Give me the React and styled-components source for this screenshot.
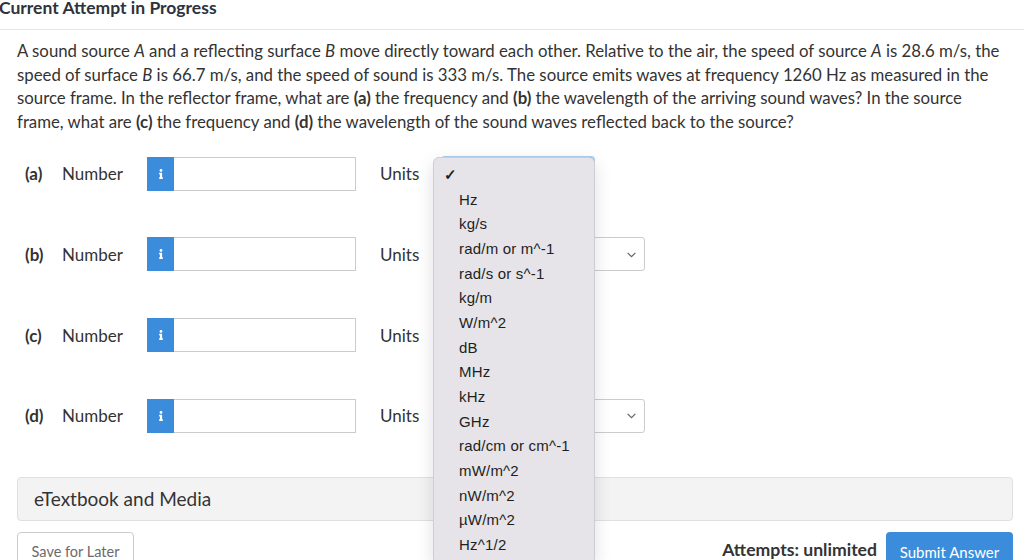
import React from 'react'
import styled, { createGlobalStyle } from 'styled-components'
import { FaInfo } from 'react-icons/fa'

const Global = createGlobalStyle`
  body {
    margin: 0;
    background: #fff;
    font-family: Lato, "Open Sans", sans-serif;
    color: #333;
    overflow: hidden;
  }
`

const Page = styled.div`
  position: relative;
  width: 1024px;
  height: 560px;
  overflow: hidden;
`

const Header = styled.div`
  height: 37px;
  border-bottom: 1px solid #e6e6e6;
  margin-top: -8px;
  h1 {
    margin: 0 0 0 -1px;
    font-size: 17.5px;
    font-weight: 700;
    color: #2d3339;
    line-height: 32px;
  }
`

const Body = styled.div`
  padding: 0 11px 0 17px;
`

const Question = styled.p`
  margin: 9px 12px 0 0;
  font-size: 16.8px;
  line-height: 23.7px;
  color: #333;
  i { font-style: italic; }
`

const Parts = styled.div`
  margin-top: 23px;
  display: flex;
  flex-direction: column;
  gap: 46.6px;
`

const Row = styled.div`
  display: flex;
  align-items: center;
  height: 34px;
  padding-left: 8px;
  font-size: 17px;
`

const Letter = styled.span`
  font-weight: 700;
  width: 37px;
  flex: none;
`

const NumLabel = styled.span`
  width: 85px;
  flex: none;
`

const InfoBtn = styled.span`
  width: 27px;
  height: 34px;
  background: #3b8ddc;
  color: #fff;
  display: flex;
  align-items: center;
  justify-content: center;
  flex: none;
  svg { font-size: 10px; }
`

const NumInput = styled.div`
  width: 181px;
  height: 32px;
  border: 1px solid #ccc;
  border-left: none;
  background: #fff;
  flex: none;
`

const UnitsLabel = styled.span`
  margin-left: 24px;
  width: 62px;
  flex: none;
`

const Select = styled.div`
  width: ${p => p.$w}px;
  height: 34px;
  border: 1px solid ${p => (p.$focus ? '#7fb2e6' : '#ccc')};
  border-radius: 3px;
  box-shadow: ${p => (p.$focus ? '0 0 0 1px #a8cdf0' : 'none')};
  display: flex;
  align-items: center;
  justify-content: flex-end;
  padding-right: 7px;
  box-sizing: border-box;
  color: #666;
  flex: none;
  svg { width: 11px; height: 11px; }
`

const Panel = styled.div`
  margin-top: 44px;
  height: 42px;
  background: #f3f3f3;
  border: 1px solid #e0e0e0;
  border-radius: 4px;
  display: flex;
  align-items: center;
  padding-left: 16px;
  font-size: 19px;
  color: #333;
`

const Footer = styled.div`
  margin-top: 11px;
  display: flex;
  align-items: flex-start;
`

const SaveBtn = styled.div`
  width: 117px;
  height: 36px;
  border: 1px solid #ccc;
  border-radius: 4px;
  font-size: 14.5px;
  color: #6b6b6b;
  display: flex;
  align-items: center;
  justify-content: center;
  padding-top: 4px;
  box-sizing: border-box;
`

const Attempts = styled.span`
  margin-left: auto;
  margin-right: 9px;
  margin-top: 7px;
  font-size: 17.6px;
  font-weight: 700;
  color: #333;
`

const SubmitBtn = styled.div`
  width: 127px;
  height: 36px;
  background: #3b8ddc;
  border-radius: 4px;
  color: #fff;
  font-size: 15px;
  display: flex;
  align-items: center;
  justify-content: center;
  padding-top: 4px;
  box-sizing: border-box;
`

const Menu = styled.ul`
  position: absolute;
  left: 433px;
  top: 157px;
  width: 160px;
  margin: 0;
  padding: 5px 0 0;
  list-style: none;
  background: #e6e4e8;
  border: 1px solid #cfcdd2;
  border-radius: 6px;
  box-shadow: 0 6px 18px rgba(0, 0, 0, 0.13);
  font-family: "Liberation Sans", Arial, sans-serif;
  font-size: 15px;
  letter-spacing: 0.2px;
  color: #1e1e1e;
  height: 400px;
`

const Item = styled.li`
  height: 24.67px;
  line-height: 24.67px;
  padding-left: 25px;
  position: relative;
`

const Check = styled.span`
  position: absolute;
  left: 10px;
  top: 0;
  font-size: 15px;
  font-weight: 700;
`

const Chevron = () => (
  <svg viewBox="0 0 10 10" fill="none" stroke="currentColor" strokeWidth="1.1">
    <path d="M1.5 3.5 L5 7 L8.5 3.5" />
  </svg>
)

const parts = [
  { key: 'a', w: 152, focus: true },
  { key: 'b', w: 203 },
  { key: 'c', w: 151 },
  { key: 'd', w: 203 },
]

const units = [
  'Hz', 'kg/s', 'rad/m or m^-1', 'rad/s or s^-1', 'kg/m', 'W/m^2', 'dB', 'MHz',
  'kHz', 'GHz', 'rad/cm or cm^-1', 'mW/m^2', 'nW/m^2', 'µW/m^2', 'Hz^1/2',
]

export default function App() {
  return (
    <Page>
      <Global />
      <Header>
        <h1>Current Attempt in Progress</h1>
      </Header>
      <Body>
        <Question>
          A sound source <i>A</i> and a reflecting surface <i>B</i> move directly toward each other. Relative to the air, the speed of source <i>A</i> is 28.6 m/s, the speed of surface <i>B</i> is 66.7 m/s, and the speed of sound is 333 m/s. The source emits waves at frequency 1260 Hz as measured in the source frame. In the reflector frame, what are <b>(a)</b> the frequency and <b>(b)</b> the wavelength of the arriving sound waves? In the source frame, what are <b>(c)</b> the frequency and <b>(d)</b> the wavelength of the sound waves reflected back to the source?
        </Question>
        <Parts>
          {parts.map(p => (
            <Row key={p.key}>
              <Letter>({p.key})</Letter>
              <NumLabel>Number</NumLabel>
              <InfoBtn><FaInfo /></InfoBtn>
              <NumInput />
              <UnitsLabel>Units</UnitsLabel>
              <Select $w={p.w} $focus={p.focus}>
                <Chevron />
              </Select>
            </Row>
          ))}
        </Parts>
        <Panel>eTextbook and Media</Panel>
        <Footer>
          <SaveBtn>Save for Later</SaveBtn>
          <Attempts>Attempts: unlimited</Attempts>
          <SubmitBtn>Submit Answer</SubmitBtn>
        </Footer>
      </Body>
      <Menu>
        <Item><Check>✓</Check></Item>
        {units.map(u => <Item key={u}>{u}</Item>)}
      </Menu>
    </Page>
  )
}
